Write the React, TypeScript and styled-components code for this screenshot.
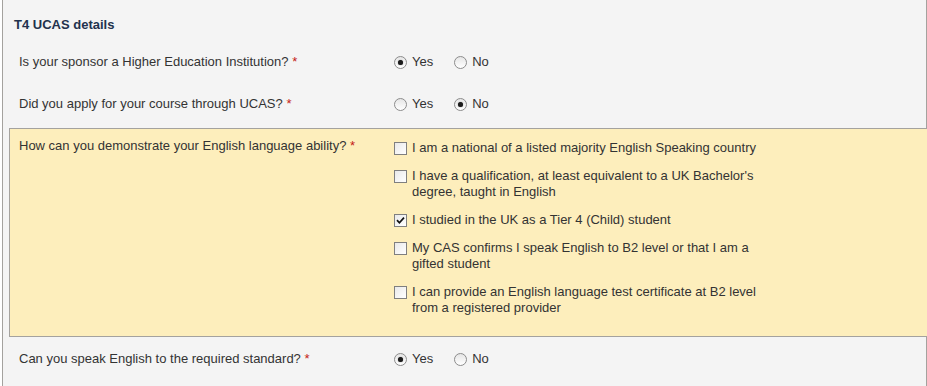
import * as React from 'react';
import styled, { createGlobalStyle } from 'styled-components';

const colors = {
  panel: '#f4f4f4',
  highlight: '#fdeebc',
  border: '#a4a29e',
  text: '#333333',
  title: '#22324d',
  required: '#c41a16',
};

const GlobalStyle = createGlobalStyle`
  html, body {
    margin: 0;
    padding: 0;
    background: #ffffff;
    overflow: hidden;
  }
  body {
    font-family: "Liberation Sans", Arial, sans-serif;
    font-size: 13px;
    line-height: 16px;
    color: ${colors.text};
  }
`;

type Option = { label: string; checked?: boolean };

const englishOptions: Option[] = [
  { label: 'I am a national of a listed majority English Speaking country' },
  { label: "I have a qualification, at least equivalent to a UK Bachelor's degree, taught in English" },
  { label: 'I studied in the UK as a Tier 4 (Child) student', checked: true },
  { label: 'My CAS confirms I speak English to B2 level or that I am a gifted student' },
  { label: 'I can provide an English language test certificate at B2 level from a registered provider' },
];

const YesNo = ({ value }: { value: 'yes' | 'no' }) => (
  <Choices>
    <Choice>
      <Radio $checked={value === 'yes'} />
      Yes
    </Choice>
    <Choice>
      <Radio $checked={value === 'no'} />
      No
    </Choice>
  </Choices>
);

const Question = ({ children }: { children: React.ReactNode }) => (
  <Label>
    {children} <Required>*</Required>
  </Label>
);

const App = () => (
  <>
    <GlobalStyle />
    <Panel>
      <Title>T4 UCAS details</Title>
      <Row>
        <Question>Is your sponsor a Higher Education Institution?</Question>
        <YesNo value="yes" />
      </Row>
      <Row>
        <Question>Did you apply for your course through UCAS?</Question>
        <YesNo value="no" />
      </Row>
      <Highlight>
        <Question>How can you demonstrate your English language ability?</Question>
        <CheckList>
          {englishOptions.map(option => (
            <CheckItem key={option.label}>
              <Checkbox>
                {option.checked && (
                  <svg width="9" height="9" viewBox="0 0 9 9">
                    <path d="M1 4.2 L3.4 6.8 L8 1.6" fill="none" stroke="#111" strokeWidth="1.7" />
                  </svg>
                )}
              </Checkbox>
              <CheckText>{option.label}</CheckText>
            </CheckItem>
          ))}
        </CheckList>
      </Highlight>
      <Row>
        <Question>Can you speak English to the required standard?</Question>
        <YesNo value="yes" />
      </Row>
    </Panel>
  </>
);

const Panel = styled.div`
  box-sizing: border-box;
  width: 925px;
  min-height: 100vh;
  margin-left: 2px;
  border-left: 1px solid ${colors.border};
  border-right: 1px solid ${colors.border};
  background: ${colors.panel};
  padding-top: 17px;
`;

const Title = styled.h2`
  margin: 0 0 7px;
  padding-left: 11px;
  font-size: 13px;
  line-height: 16px;
  font-weight: bold;
  color: ${colors.title};
`;

const Row = styled.div`
  display: grid;
  grid-template-columns: 375px 1fr;
  padding: 14px 0 12px 16px;
`;

const Label = styled.div`
  white-space: nowrap;
`;

const Required = styled.span`
  color: ${colors.required};
`;

const Choices = styled.div`
  display: flex;
  align-items: center;
  gap: 21px;
`;

const Choice = styled.label`
  display: inline-flex;
  align-items: center;
  gap: 5px;
`;

const Radio = styled.span<{ $checked?: boolean }>`
  box-sizing: border-box;
  width: 13px;
  height: 13px;
  border-radius: 50%;
  border: 1px solid #8c8c8c;
  background: linear-gradient(#e6e6e6, #ffffff);
  display: inline-flex;
  align-items: center;
  justify-content: center;

  &::after {
    content: '';
    display: ${p => (p.$checked ? 'block' : 'none')};
    width: 5px;
    height: 5px;
    border-radius: 50%;
    background: #1b1b1b;
    box-shadow: 0 0 1px #555;
  }
`;

const Highlight = styled.div`
  display: grid;
  grid-template-columns: 375px 370px;
  margin: 4px -10px 0 6px;
  padding: 9px 0 20px 9px;
  background: ${colors.highlight};
  border: 1px solid ${colors.border};
  border-right: none;
`;

const CheckList = styled.div`
  display: flex;
  flex-direction: column;
  gap: 12px;
  padding-top: 2px;
`;

const CheckItem = styled.label`
  display: flex;
  align-items: flex-start;
  gap: 5px;
`;

const Checkbox = styled.span`
  box-sizing: border-box;
  flex: none;
  width: 13px;
  height: 13px;
  margin-top: 2px;
  border: 1px solid #7f7f7f;
  background: linear-gradient(135deg, #e9e9e9, #ffffff);
  display: inline-flex;
  align-items: center;
  justify-content: center;
`;

const CheckText = styled.span`
  flex: 1;
`;

export default App;
